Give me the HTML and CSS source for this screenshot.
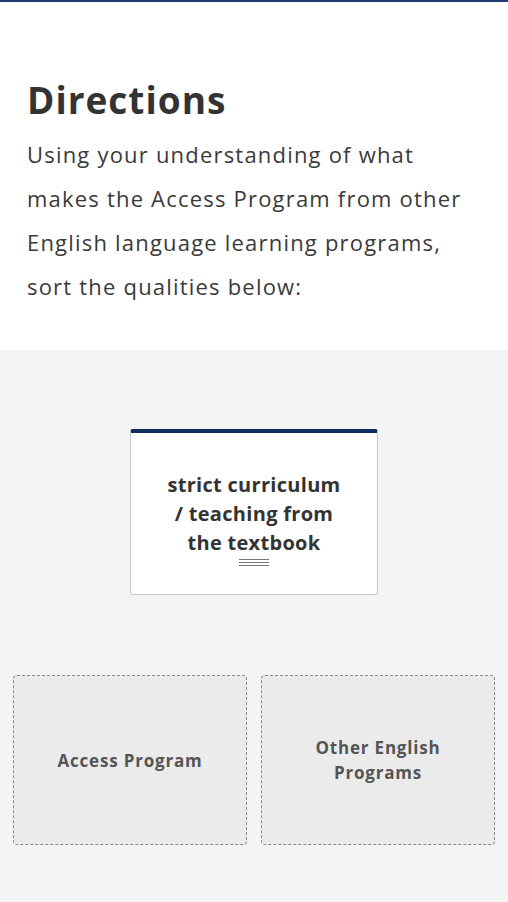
FILE: index.html
```html
<!DOCTYPE html>
<html lang="en">
<head>
<meta charset="utf-8">
<title>Directions</title>
<link rel="stylesheet" href="styles.css">
</head>
<body>
<div class="topbar"></div>
<section class="directions">
  <h1 class="title">Directions</h1>
  <p class="text">Using your understanding of what makes the Access Program from other English language learning programs, sort the qualities below:</p>
</section>
<section class="activity">
  <div class="card-wrap">
    <div class="card">
      <div class="card-text">strict curriculum / teaching from the textbook</div>
      <div class="handle"><span></span><span></span><span></span></div>
    </div>
  </div>
  <div class="zones">
    <div class="zone"><span class="zone-label">Access Program</span></div>
    <div class="zone"><span class="zone-label">Other English Programs</span></div>
  </div>
</section>
</body>
</html>
```
FILE: styles.css
```css
html, body {
  margin: 0;
  padding: 0;
  background: #f4f4f4;
}
body {
  font-family: "Open Sans", "Liberation Sans", sans-serif;
  color: #333;
}
.topbar {
  height: 2px;
  background: #1d3e6e;
}
.directions {
  background: #fff;
  padding: 75px 27px 42px 27px;
}
.title {
  margin: 0;
  font-size: 37px;
  font-weight: 700;
  line-height: 46px;
  letter-spacing: 1px;
  color: #333;
}
.text {
  margin: 9px 0 0 0;
  font-size: 22px;
  line-height: 44px;
  letter-spacing: 1.2px;
  color: #3a3a3a;
}
.activity {
  padding: 79px 13px 58px 13px;
}
.card-wrap {
  display: flex;
  justify-content: center;
}
.card {
  width: 248px;
  height: 166px;
  box-sizing: border-box;
  background: #fff;
  border: 1px solid #c9c9c9;
  border-top: 4px solid #0d2d5e;
  border-radius: 3px;
  display: flex;
  flex-direction: column;
  align-items: center;
  padding-top: 37px;
}
.card-text {
  width: 182px;
  text-align: center;
  font-size: 20px;
  font-weight: 700;
  line-height: 29px;
  letter-spacing: 0.3px;
  color: #333;
}
.handle {
  margin-top: 2px;
  display: flex;
  flex-direction: column;
  gap: 2px;
}
.handle span {
  display: block;
  width: 30px;
  height: 1px;
  background: #777;
}
.zones {
  margin-top: 80px;
  display: grid;
  grid-template-columns: 1fr 1fr;
  gap: 14px;
}
.zone {
  height: 170px;
  box-sizing: border-box;
  background: #ebebeb;
  border: 1px dashed #8a8a8a;
  border-radius: 4px;
  display: flex;
  align-items: center;
  justify-content: center;
  text-align: center;
  padding: 0 30px;
}
.zone-label {
  font-size: 17px;
  font-weight: 700;
  line-height: 25px;
  letter-spacing: 0.8px;
  color: #555;
}
```
